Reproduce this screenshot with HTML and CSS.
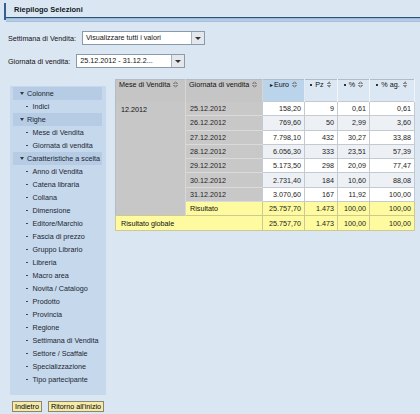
FILE: index.html
```html
<!DOCTYPE html>
<html lang="it">
<head>
    <meta charset="UTF-8">
    <title>Riepilogo Selezioni</title>
    <link rel="stylesheet" href="styles.css">
</head>
<body>
    <!-- titolo -->
    <div class="titlebar">
        <div class="title-mark"></div>
        <div class="title-body">
            <div class="title-txt">Riepilogo Selezioni</div>
            <div class="title-rule"></div>
        </div>
    </div>

    <!-- filtri -->
    <div class="filter first">
        <span class="filter-label">Settimana di Vendita:</span>
        <div class="combo combo-wide">
            <span class="combo-val">Visualizzare tutti i valori</span>
            <span class="combo-btn"></span>
        </div>
    </div>
    <div class="filter">
        <span class="filter-label">Giornata di vendita:</span>
        <div class="combo combo-narrow">
            <span class="combo-val">25.12.2012 - 31.12.2...</span>
            <span class="combo-btn"></span>
        </div>
    </div>

    <div class="main">
        <div class="side">
            <div class="nav">
                <div class="nav-head">Colonne</div>
                <div class="nav-item">Indici</div>
                <div class="nav-head">Righe</div>
                <div class="nav-item">Mese di Vendita</div>
                <div class="nav-item">Giornata di vendita</div>
                <div class="nav-head">Caratteristiche a scelta</div>
                <div class="nav-item">Anno di Vendita</div>
                <div class="nav-item">Catena libraria</div>
                <div class="nav-item">Collana</div>
                <div class="nav-item">Dimensione</div>
                <div class="nav-item">Editore/Marchio</div>
                <div class="nav-item">Fascia di prezzo</div>
                <div class="nav-item">Gruppo Librario</div>
                <div class="nav-item">Libreria</div>
                <div class="nav-item">Macro area</div>
                <div class="nav-item">Novita / Catalogo</div>
                <div class="nav-item">Prodotto</div>
                <div class="nav-item">Provincia</div>
                <div class="nav-item">Regione</div>
                <div class="nav-item">Settimana di Vendita</div>
                <div class="nav-item">Settore / Scaffale</div>
                <div class="nav-item">Specializzazione</div>
                <div class="nav-item">Tipo partecipante</div>
            </div>
            <div class="btns">
                <button class="btn">Indietro</button>
                <button class="btn">Ritorno all'inizio</button>
            </div>
        </div>

        <table class="grid">
            <colgroup>
                <col style="width:70px"><col style="width:77px"><col style="width:42px">
                <col style="width:33px"><col style="width:32px"><col style="width:45px">
            </colgroup>
            <tr class="head">
                <th class="h-dim">Mese di Vendita <i class="sort"></i></th>
                <th class="h-dim">Giornata di vendita <i class="sort"></i></th>
                <th class="h-key"><span class="tri">&#9656;</span>Euro <i class="sort"></i></th>
                <th class="h-kf"><span class="dot"></span>Pz <i class="sort"></i></th>
                <th class="h-kf"><span class="dot"></span>% <i class="sort"></i></th>
                <th class="h-kf"><span class="dot"></span>% ag. <i class="sort"></i></th>
            </tr>
            <tr>
                <td class="dim-mese" rowspan="7">12.2012</td>
                <td class="dim">25.12.2012</td>
                <td class="num">158,20</td><td class="num">9</td><td class="num">0,61</td><td class="num">0,61</td>
            </tr>
            <tr class="alt">
                <td class="dim">26.12.2012</td>
                <td class="num">769,60</td><td class="num">50</td><td class="num">2,99</td><td class="num">3,60</td>
            </tr>
            <tr>
                <td class="dim">27.12.2012</td>
                <td class="num">7.798,10</td><td class="num">432</td><td class="num">30,27</td><td class="num">33,88</td>
            </tr>
            <tr class="alt">
                <td class="dim">28.12.2012</td>
                <td class="num">6.056,30</td><td class="num">333</td><td class="num">23,51</td><td class="num">57,39</td>
            </tr>
            <tr>
                <td class="dim">29.12.2012</td>
                <td class="num">5.173,50</td><td class="num">298</td><td class="num">20,09</td><td class="num">77,47</td>
            </tr>
            <tr class="alt">
                <td class="dim">30.12.2012</td>
                <td class="num">2.731,40</td><td class="num">184</td><td class="num">10,60</td><td class="num">88,08</td>
            </tr>
            <tr>
                <td class="dim">31.12.2012</td>
                <td class="num">3.070,60</td><td class="num">167</td><td class="num">11,92</td><td class="num">100,00</td>
            </tr>
            <tr class="sum">
                <td class="dim-mese"></td>
                <td class="txt">Risultato</td>
                <td class="num">25.757,70</td><td class="num">1.473</td><td class="num">100,00</td><td class="num">100,00</td>
            </tr>
            <tr class="sum">
                <td class="txt" colspan="2">Risultato globale</td>
                <td class="num">25.757,70</td><td class="num">1.473</td><td class="num">100,00</td><td class="num">100,00</td>
            </tr>
        </table>
    </div>
</body>
</html>
```

FILE: styles.css
```css
* { margin: 0; padding: 0; box-sizing: border-box; }
body {
    background: #dbe6f3;
    font-family: "Liberation Sans", Arial, sans-serif;
    font-size: 7.2px;
    color: #111;
}

/* titolo */
.titlebar { display: flex; padding: 3px 0 0 4px; }
.title-mark { width: 2px; height: 17px; background: #34608f; }
.title-body { flex: 1; }
.title-txt {
    height: 14px;
    line-height: 14px;
    padding-left: 8px;
    font-weight: bold;
    font-size: 7.5px;
    color: #111a24;
}
.title-rule {
    height: 5px;
    border-top: 1px solid #2d5274;
    background: linear-gradient(#92b2d4, #bdd2e8 50%, #9cb9d9);
}

/* filtri */
.filter { display: flex; align-items: center; gap: 6px; padding-left: 8px; margin-top: 9px; height: 14px; }
.combo {
    display: flex;
    height: 14px;
    background: #fff;
    border: 1px solid #8a9aab;
}
.combo-wide { width: 123px; }
.combo-narrow { width: 109px; }
.combo-val { flex: 1; padding-left: 3px; line-height: 12px; }
.combo-btn {
    width: 13px;
    background: #e4e8ec;
    border-left: 1px solid #a7b2bd;
    display: flex;
    align-items: center;
    justify-content: center;
}
.combo-btn::after {
    content: "";
    border-left: 3px solid transparent;
    border-right: 3px solid transparent;
    border-top: 3px solid #333;
}

/* area principale */
.main { display: flex; align-items: flex-start; gap: 9px; padding-left: 10px; margin-top: 11px; }
.side { width: 96px; margin-top: 7px; }
.nav { background: #c6d8ec; padding: 1px 4px 9px 3px; }
.nav-head, .nav-item { height: 13px; line-height: 13px; white-space: nowrap; }
.nav-head { background: #b6cce4; padding-left: 7px; color: #1b2633; }
.nav-head::before {
    content: "";
    display: inline-block;
    border-left: 2.5px solid transparent;
    border-right: 2.5px solid transparent;
    border-top: 3px solid #2a3a4c;
    margin-right: 3px;
    vertical-align: 1px;
}
.nav-item { padding-left: 13px; color: #1b2633; }
.nav-item::before {
    content: "";
    display: inline-block;
    width: 1.5px;
    height: 1.5px;
    background: #3a4a5c;
    margin-right: 5px;
    vertical-align: 2px;
}
.btns { display: flex; gap: 6px; margin-top: 6px; padding-left: 2px; }
.btn {
    font-family: "Liberation Sans", Arial, sans-serif;
    font-size: 7.2px;
    height: 11px;
    line-height: 9px;
    padding: 0 2px;
    background: #f5eaa8;
    border: 1px solid #8c8670;
    color: #000;
}

/* tabella */
.grid {
    width: 299px;
    table-layout: fixed;
    border-collapse: collapse;
    border: 1px solid #b3bcc6;
}
.grid th, .grid td {
    height: 14.3px;
    padding: 0 3px;
    white-space: nowrap;
    overflow: hidden;
    font-weight: normal;
}
.head th { height: 22px; text-align: left; }
.h-dim { background: #c6c5c5; vertical-align: top; padding: 5px 4px 0 5px; border-right: 1px solid #d6d6d6; }
.h-key { background: #bad4ec; vertical-align: top; padding-top: 5px; text-align: center !important; border-right: 1px solid #e3ebf4; }
.h-kf { background: #dbe7f3; vertical-align: top; padding-top: 10px; text-align: center !important; border-right: 1px solid #f1f5fa; }
.tri { font-size: 6px; margin-right: 1px; }
.dot {
    display: inline-block;
    width: 2px;
    height: 2px;
    background: #333;
    margin-right: 3px;
    vertical-align: 1.5px;
}
.sort {
    display: inline-block;
    width: 5px;
    height: 7px;
    margin-left: 1px;
    vertical-align: -1px;
    background:
        linear-gradient(to bottom right, transparent 50%, #8a8a8a 50%) left top / 2.5px 3px no-repeat,
        linear-gradient(to bottom left, transparent 50%, #8a8a8a 50%) right top / 2.5px 3px no-repeat,
        linear-gradient(to top right, transparent 50%, #8a8a8a 50%) left bottom / 2.5px 3px no-repeat,
        linear-gradient(to top left, transparent 50%, #8a8a8a 50%) right bottom / 2.5px 3px no-repeat;
}
.dim-mese { background: #c8c7c7; vertical-align: top; padding: 3px 5px 0 !important; border-right: 1px solid #d8d8d8; }
.dim { background: #c9c8c8; padding-left: 4px !important; border-bottom: 1px solid #dadada; color: #222; }
.num { text-align: right; background: #fff; border: 1px solid #c3cad2; color: #222; }
.alt .num { background: #edf1f6; }
.sum td { background: #fdfa9f; border: 1px solid #cfc98f; }
.sum .dim-mese { background: #c8c7c7; border: none; border-right: 1px solid #d8d8d8; }
.sum .txt { padding-left: 4px; }
.sum .txt[colspan] { padding-left: 5px; }
```
